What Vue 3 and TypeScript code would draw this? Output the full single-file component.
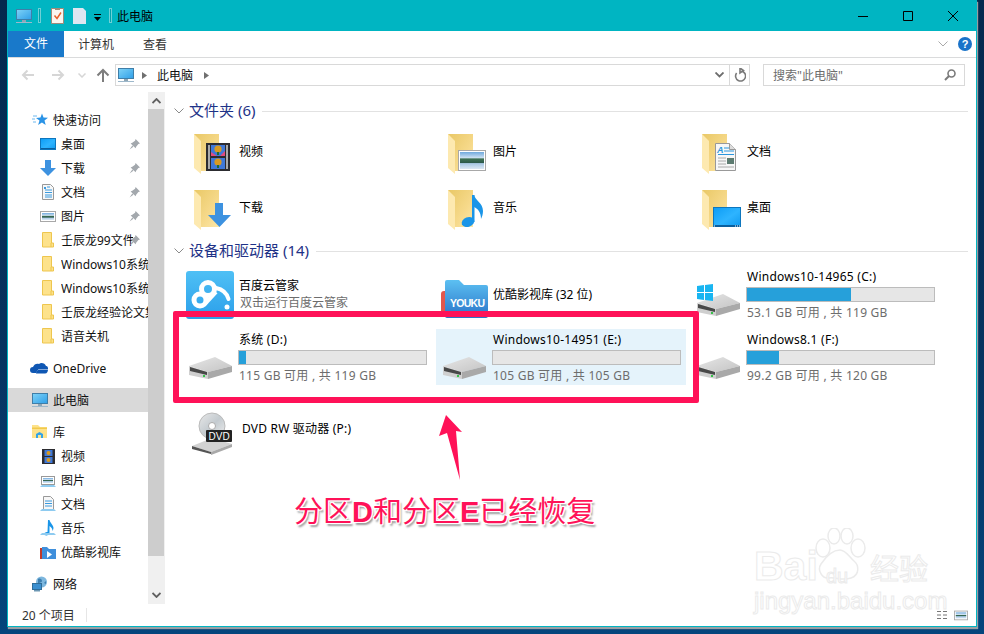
<template>
  <div class="desktop">
    <svg class="sprites" width="0" height="0">
      <defs>
        <linearGradient id="gFolder" x1="0" y1="0" x2="1" y2="1">
          <stop offset="0" stop-color="#e9c866" />
          <stop offset="0.6" stop-color="#f6d98a" />
          <stop offset="1" stop-color="#fce7a8" />
        </linearGradient>
        <linearGradient id="gScreen" x1="0" y1="0" x2="1" y2="1">
          <stop offset="0" stop-color="#7fd3f7" />
          <stop offset="1" stop-color="#2f9fe8" />
        </linearGradient>
        <linearGradient id="gDesk" x1="0" y1="0" x2="1" y2="1">
          <stop offset="0" stop-color="#0c9cf5" />
          <stop offset="0.55" stop-color="#2eb4ff" />
          <stop offset="1" stop-color="#0f9af0" />
        </linearGradient>
        <linearGradient id="gLake" x1="0" y1="0" x2="0" y2="1">
          <stop offset="0" stop-color="#6fa9dd" />
          <stop offset="0.35" stop-color="#cfe2f3" />
          <stop offset="0.4" stop-color="#3f7355" />
          <stop offset="0.62" stop-color="#2c5a4a" />
          <stop offset="0.68" stop-color="#a8c8e4" />
          <stop offset="1" stop-color="#dbe8f4" />
        </linearGradient>
        <linearGradient id="gBaidu" x1="0" y1="0" x2="0" y2="1">
          <stop offset="0" stop-color="#4fc0f5" />
          <stop offset="1" stop-color="#2b9fea" />
        </linearGradient>
        <linearGradient id="gYouku" x1="0" y1="0" x2="0" y2="1">
          <stop offset="0" stop-color="#5cc0f2" />
          <stop offset="1" stop-color="#2a74c8" />
        </linearGradient>
        <linearGradient id="gDriveTop" x1="0" y1="0" x2="1" y2="1">
          <stop offset="0" stop-color="#e6e6e6" />
          <stop offset="1" stop-color="#c4c4c4" />
        </linearGradient>
        <linearGradient id="gDisc" x1="0" y1="0" x2="1" y2="1">
          <stop offset="0" stop-color="#e8e8e8" />
          <stop offset="0.5" stop-color="#c4cbd0" />
          <stop offset="1" stop-color="#f0f0f0" />
        </linearGradient>

        <g id="folder">
          <path d="M4 4h25v37H11z" fill="url(#gFolder)" />
          <path d="M4 4l7 7v33l-7-6z" fill="#fde9b0" />
        </g>
        <g id="film">
          <rect x="16" y="13" width="24" height="28" fill="#2c2c30" />
          <rect x="18" y="15" width="2" height="24" fill="#aaa" />
          <rect x="36" y="15" width="2" height="24" fill="#aaa" />
          <rect x="21" y="15" width="14" height="11" fill="#3f78d8" />
          <rect x="21" y="28" width="14" height="11" fill="#3f78d8" />
          <path d="M21 22l6 4h-6zM35 21l-5 5h5z" fill="#e34a7d" />
          <circle cx="28" cy="19" r="3.6" fill="#d99a20" />
          <circle cx="28" cy="32" r="3.6" fill="#d99a20" />
          <rect x="27" y="22" width="2" height="3" fill="#1f6a35" />
          <rect x="27" y="35" width="2" height="3" fill="#1f6a35" />
        </g>
        <g id="arrow">
          <path d="M25 17h8v12h8L29.500 41 18 29h7z" fill="#3d92e0" />
        </g>
        <g id="picture">
          <rect x="14.500" y="20.500" width="27" height="20" fill="#fff" stroke="#a8a8a8" />
          <rect x="16" y="22" width="24" height="17" fill="url(#gLake)" />
        </g>
        <g id="doc">
          <path d="M17.500 13.500h14l6 6v21h-20z" fill="#f7f7f7" stroke="#999" />
          <path d="M31.500 13.500v6h6" fill="#ddd" stroke="#999" />
          <text x="19" y="23" class="doc-a">A</text>
          <path d="M26 18h5M26 21h10M20 24.500h16" stroke="#2a96dd" />
          <path d="M20 28h8M20 31h8M20 34h8M20 37h16" stroke="#aaa" />
          <rect x="29" y="28" width="7" height="6" fill="#5c7b70" />
        </g>
        <g id="music" fill="#1a95e8">
          <ellipse cx="24" cy="36" rx="6.500" ry="4.800" transform="rotate(-20 24 36)" />
          <rect x="28" y="9" width="2.500" height="27" />
          <path d="M30 9c1 5 9 8 9 16 0 3-1 6-2 8 0-7-3-10-7-12z" />
        </g>
        <g id="desk">
          <rect x="15.500" y="21.500" width="27" height="19" fill="url(#gDesk)" stroke="#0e76bd" />
          <rect x="16" y="39" width="26" height="2" fill="#0a5f9e" />
          <path d="M16 40h1M37 40h1M39 40h1M41 40h1" stroke="#fff" />
        </g>
        <g id="drive" transform="translate(-1 0)">
          <path d="M0 33l26-9 17 9-24 6z" fill="url(#gDriveTop)" />
          <path d="M0 33l19 6v7L0 42z" fill="#cfcfcf" />
          <path d="M1 34l17 5v3L1 38z" fill="#484848" />
          <path d="M19 39l24-6v6l-24 7z" fill="#a9a9a9" />
          <rect x="14" y="42" width="2" height="2" fill="#37c24a" />
        </g>
        <g id="winlogo">
          <path d="M-1 16l7-1v7h-7zM7 15l8-1v8H7zM-1 23h7v7l-7-1zM7 23h8v8l-8-1z" fill="#19b5f1" />
        </g>
        <g id="baidu">
          <rect x="-4" y="1" width="48" height="48" rx="3" fill="url(#gBaidu)" />
          <g fill="none" stroke="#fff">
            <circle cx="10" cy="30" r="6" stroke-width="5" />
            <circle cx="18" cy="19" r="6.500" stroke-width="5" />
            <path d="M15 34L26 22" stroke-width="4" />
            <path d="M26 18Q36 20 38.500 29" stroke-width="4" stroke-linecap="round" />
          </g>
          <circle cx="37" cy="37" r="2.500" fill="#fff" />
        </g>
        <g id="youku">
          <path d="M-3 24a3 3 0 0 1 3-3h6v26h-9z" fill="#e2574c" />
          <path d="M1 12a2 2 0 0 1 2-2h12l5 5h22a2 2 0 0 1 2 2v29a2 2 0 0 1-2 2H3a2 2 0 0 1-2-2z" fill="url(#gYouku)" />
          <text x="6" y="37" class="youku-t" textLength="35">YOUKU</text>
        </g>
        <g id="dvd">
          <circle cx="22" cy="30" r="13" fill="url(#gDisc)" stroke="#bbb" />
          <circle cx="22" cy="30" r="3.500" fill="#fff" stroke="#aaa" />
          <path d="M2 50l20-8 20 6-21 8z" fill="#d2d2d2" />
          <path d="M2 50l19 6v2L2 53z" fill="#555" />
          <path d="M21 56l21-8v3l-21 8z" fill="#a9a9a9" />
          <rect x="16" y="34" width="26" height="12" rx="1" fill="#222" />
          <text x="18.500" y="44" class="dvd-t">DVD</text>
        </g>

        <g id="s-pc">
          <rect x="0.500" y="1.500" width="15" height="10" fill="url(#gScreen)" stroke="#3f7ea8" />
          <rect x="6" y="12" width="4" height="2" fill="#8fa6b5" />
          <rect x="0" y="14" width="16" height="1" fill="#9db8cb" />
        </g>
        <g id="s-star">
          <path d="M10 1.500l1.500 4 4.500.3-3.500 2.800 1.200 4.400-3.800-2.500-3.800 2.500L7.500 8.600 4 6l4.500-.4z" fill="#2a93e6" />
          <path d="M1 4h4M0 7h3M1 10h3" stroke="#6db8ef" />
        </g>
        <g id="s-desk">
          <rect x="0.500" y="2.500" width="15" height="11" fill="url(#gDesk)" stroke="#0e76bd" />
          <rect x="1" y="12" width="14" height="1" fill="#0a5f9e" />
        </g>
        <g id="s-down">
          <path d="M5 0h6v8h5l-8 8-8-8h5z" fill="#3d92e0" />
        </g>
        <g id="s-doc">
          <path d="M2.500 .5h8l3 3v12h-11z" fill="#f7f7f7" stroke="#999" />
          <path d="M7 3h3M5 6h7M5 8.500h7M5 11h7M5 13h7" stroke="#3a9ade" />
          <path d="M4 3h2v2H4z" fill="#3a9ade" />
        </g>
        <g id="s-pic">
          <rect x="0.500" y="3.500" width="15" height="10" fill="#fff" stroke="#a8a8a8" />
          <rect x="2" y="5" width="12" height="7" fill="url(#gLake)" />
        </g>
        <g id="s-fold">
          <path d="M2.500 .5h9v10.500h2v4h-11z" fill="#fde28b" stroke="#eec64e" />
          <path d="M11.500 11v4h-1v-4z" fill="#eec64e" />
        </g>
        <g id="s-cloud">
          <path d="M1 13a3 3 0 0 1 0-6c1-3 4-4 6-3 2-2 6-1 7 2 2 0 2 2 2 3h-8c-2 0-3 2-4 4z" fill="#0f57b3" />
          <path d="M4 13.500c0-3 2-4 4-4h8c0 2-1 4-3 4z" fill="#0f57b3" />
        </g>
        <g id="s-lib">
          <path d="M0 1h6l2 2h7v11H0z" fill="#fde28b" />
          <rect x="0" y="3.500" width="15" height="1.500" fill="#f2c94c" />
          <path d="M4 14v-4l3.500-2 3.500 2v4z" fill="#35a4e6" />
          <rect x="6" y="11" width="3" height="3" fill="#fde28b" />
        </g>
        <g id="s-film">
          <rect x="2" y="1" width="13" height="15" fill="#2c2c30" />
          <rect x="4.500" y="2" width="8" height="6" fill="#3f78d8" />
          <rect x="4.500" y="9" width="8" height="6" fill="#3f78d8" />
          <circle cx="8.500" cy="5" r="2" fill="#d99a20" />
          <circle cx="8.500" cy="12" r="2" fill="#d99a20" />
        </g>
        <g id="s-libpic">
          <rect x="1.500" y="4.500" width="13" height="8" fill="#fff" stroke="#999" />
          <rect x="3" y="6" width="10" height="5" fill="url(#gLake)" />
          <path d="M0 15l2-2h12l2 2z" fill="#8ecbf0" />
        </g>
        <g id="s-libdoc">
          <path d="M3.500 .5h7l3 3v10h-10z" fill="#f7f7f7" stroke="#999" />
          <path d="M5 5h7M5 7.500h7M5 10h7" stroke="#3a9ade" />
          <path d="M0 15l2-2h12l2 2z" fill="#8ecbf0" />
        </g>
        <g id="s-libmus">
          <path d="M8 0h1.500c.5 3 4 5 4 8 0 1-.5 2-1 3 0-3-2-4-3-5v7c0 2-3 3-5 2-1-2 1-3 3-3z" fill="#1a95e8" />
          <path d="M0 15l2-2h12l2 2z" fill="#8ecbf0" />
        </g>
        <g id="s-youku">
          <rect x="0" y="4" width="3" height="11" fill="#c0392b" />
          <path d="M2 3h5l2 2h7v10H2z" fill="#3f8fdb" />
          <path d="M7 7l5 3.500-5 3.500z" fill="#fff" />
        </g>
        <g id="s-net">
          <circle cx="9.500" cy="6" r="5.500" fill="#7db7de" />
          <path d="M6 3c2-1 4 0 4 2s-3 1-4 3zM12 7l2-2v3z" fill="#3d7fb0" />
          <rect x="0.500" y="7.500" width="9" height="6" fill="#3a8fd0" stroke="#2f6d99" />
          <rect x="2" y="14" width="6" height="1.500" fill="#6d97b3" />
        </g>
      </defs>
    </svg>

    <div class="window">
      <div class="titlebar">
        <svg class="ic16"><use href="#s-pc" /></svg>
        <i class="tsep"></i>
        <svg class="qa-doc" viewBox="0 0 13 16">
          <path d="M.5.5h12v15H.5z" fill="#fbf6ef" stroke="#a08a7a" />
          <path d="M3.500 7.500l2.500 3 4-6" fill="none" stroke="#e8602a" stroke-width="1.500" />
          <rect x="4" y="0" width="5" height="2" fill="#a08a7a" />
        </svg>
        <svg class="qa-blank" viewBox="0 0 13 16">
          <path d="M0 0h10l3 3v13H0z" fill="#dfe6f1" />
        </svg>
        <svg class="qa-drop" viewBox="0 0 7 7">
          <path d="M0 0h7v1H0z" fill="#000" />
          <path d="M0 3h7L3.500 7z" fill="#000" />
        </svg>
        <i class="tsep second"></i>
        <span class="title">此电脑</span>
        <div class="winbtns">
          <svg width="10" height="10" viewBox="0 0 10 10"><path d="M0 5.500h10" stroke="#000" /></svg>
          <svg width="10" height="10" viewBox="0 0 10 10"><path d="M.5.500h9v9h-9z" fill="none" stroke="#000" /></svg>
          <svg width="10" height="10" viewBox="0 0 10 10"><path d="M0 0l10 10M10 0L0 10" stroke="#000" /></svg>
        </div>
      </div>

      <div class="tabs">
        <span class="tab file">文件</span>
        <span class="tab comp">计算机</span>
        <span class="tab view">查看</span>
        <svg class="collapse" width="10" height="6" viewBox="0 0 10 6"><path d="M.5.500l4.500 4.500L9.500.500" fill="none" stroke="#a9a9a9" /></svg>
        <span class="help">?</span>
      </div>

      <div class="addr">
        <svg class="nav" width="14" height="12" viewBox="0 0 14 12"><path d="M13 6H2M6.500 1.500L2 6l4.500 4.500" fill="none" stroke="#d6d6d6" stroke-width="2" /></svg>
        <svg class="nav fwd" width="14" height="12" viewBox="0 0 14 12"><path d="M1 6h11M7.500 1.500L12 6l-4.500 4.500" fill="none" stroke="#d6d6d6" stroke-width="2" /></svg>
        <svg class="nav drop" width="8" height="5" viewBox="0 0 8 5"><path d="M.5.500L4 4 7.500.500" fill="none" stroke="#d6d6d6" stroke-width="1.500" /></svg>
        <svg class="nav up" width="14" height="14" viewBox="0 0 14 14"><path d="M7 14V2M1.500 7.500L7 2l5.500 5.500" fill="none" stroke="#7d7d7d" stroke-width="2" /></svg>
        <div class="pathbox">
          <svg class="ic16"><use href="#s-pc" /></svg>
          <svg class="crumb first" width="5" height="7" viewBox="0 0 5 7"><path d="M0 0l5 3.500L0 7z" fill="#707070" /></svg>
          <span class="crumb-t">此电脑</span>
          <svg class="crumb" width="5" height="7" viewBox="0 0 5 7"><path d="M0 0l5 3.500L0 7z" fill="#707070" /></svg>
          <svg class="pathdrop" width="9" height="6" viewBox="0 0 9 6"><path d="M.5.500l4 4 4-4" fill="none" stroke="#6d6d6d" stroke-width="1.800" /></svg>
          <div class="refresh">
            <svg width="12" height="14" viewBox="0 0 12 14"><path d="M7.500 3.100A5 5 0 1 1 2.600 5M6 0v5l3.500-2.500z" fill="none" stroke="#7a7a7a" stroke-width="1.600" /></svg>
          </div>
        </div>
        <div class="searchbox">
          <span>搜索"此电脑"</span>
          <svg width="12" height="12" viewBox="0 0 12 12"><circle cx="7.500" cy="4.500" r="3.500" fill="none" stroke="#7a7a7a" stroke-width="1.600" /><path d="M5 7l-4 4" stroke="#7a7a7a" stroke-width="2" /></svg>
        </div>
      </div>

      <div class="body">
        <nav class="side">
          <div
            v-for="row in navRows"
            :key="row.key"
            class="navrow"
            :class="{ sub: row.sub, active: row.active, gap: row.gap }"
          >
            <svg class="ic16"><use :href="'#s-' + row.icon" /></svg>
            <span class="navlabel" :class="{ pinned: row.pin }">{{ row.label }}</span>
            <svg v-if="row.pin" class="pin" width="11" height="11" viewBox="0 0 10 10">
              <path d="M6 0l4 4-1.500.5L6.500 7 6 8.500 1.500 4 3 3.500 5.500 1.500zM3 6L.5 9.500 4 7z" fill="#a3a8ad" />
            </svg>
          </div>
        </nav>
        <div class="scroll">
          <svg class="sarrow" width="9" height="6" viewBox="0 0 9 6"><path d="M.5 5l4-4 4 4" fill="none" stroke="#606060" stroke-width="1.800" /></svg>
          <div class="thumb"></div>
          <svg class="sarrow down" width="9" height="6" viewBox="0 0 9 6"><path d="M.5 1l4 4 4-4" fill="none" stroke="#606060" stroke-width="1.800" /></svg>
        </div>

        <main class="pane">
          <div class="group">
            <svg width="10" height="6" viewBox="0 0 10 6"><path d="M.5.500L5 5 9.500.500" fill="none" stroke="#8a8a8a" /></svg>
            <span>文件夹 (6)</span>
            <i></i>
          </div>
          <div class="tiles folders">
            <div v-for="f in folders" :key="f.label" class="tile">
              <svg class="big" viewBox="0 0 48 48">
                <use href="#folder" />
                <use :href="'#' + f.icon" />
              </svg>
              <span class="fname">{{ f.label }}</span>
            </div>
          </div>

          <div class="group second">
            <svg width="10" height="6" viewBox="0 0 10 6"><path d="M.5.500L5 5 9.500.500" fill="none" stroke="#8a8a8a" /></svg>
            <span>设备和驱动器 (14)</span>
            <i></i>
          </div>
          <div class="tiles devices">
            <div class="tile">
              <svg class="big dev" viewBox="0 0 48 48"><use href="#baidu" /></svg>
              <div class="app">
                <div>百度云管家</div>
                <div class="sub-t">双击运行百度云管家</div>
              </div>
            </div>
            <div class="tile">
              <svg class="big dev" viewBox="0 0 48 48"><use href="#youku" /></svg>
              <span class="single">优酷影视库 (32 位)</span>
            </div>
            <div v-for="d in drives" :key="d.name" class="tile" :class="{ selected: d.selected }">
              <svg class="big dev" viewBox="0 0 48 48">
                <use href="#drive" />
                <use v-if="d.win" href="#winlogo" />
              </svg>
              <div class="drive">
                <div class="dname">{{ d.name }}</div>
                <div class="bar"><div class="fill" :style="{ width: d.used + '%' }"></div></div>
                <div class="sub-t">{{ d.free }}</div>
              </div>
            </div>
            <div class="tile dvdrow">
              <svg class="big dev" viewBox="0 0 48 48"><use href="#dvd" /></svg>
              <span class="single dvdlabel">DVD RW 驱动器 (P:)</span>
            </div>
          </div>
        </main>
      </div>

      <div class="status">
        <span class="count">20 个项目</span>
        <i class="ssep"></i>
        <div class="views">
          <svg width="10" height="10" viewBox="0 0 10 10"><path d="M0 1.500h4M6 1.500h4M0 5h4M6 5h4M0 8.500h4M6 8.500h4" stroke="#777" /></svg>
          <svg class="ic16 thumbs" viewBox="0 0 16 16"><use href="#s-pic" /></svg>
        </div>
      </div>
    </div>

    <!-- annotations drawn over the screenshot -->
    <div class="redbox"></div>
    <svg class="redarrow" width="30" height="70" viewBox="435 412 30 70">
      <path d="M446 415l16 17-6-1 4 49-13-47-8 3z" fill="#ff1258" />
    </svg>
    <div class="caption">分区<b>D</b>和分区<b>E</b>已经恢复</div>

    <div class="mark">
      <span class="m-bai">Bai</span>
      <svg class="m-paw" width="52" height="58" viewBox="0 0 52 58">
        <g fill="#fff" stroke="#ebebeb" stroke-width="1.500">
          <ellipse cx="9" cy="20" rx="7" ry="9" />
          <ellipse cx="20" cy="8" rx="6" ry="8" />
          <ellipse cx="33" cy="8" rx="6" ry="8" />
          <ellipse cx="44" cy="20" rx="7" ry="9" />
          <path d="M26 22c6 0 9 7 14 11s6 14-3 17-15-1-22 0-12-8-8-14 11-14 19-14z" />
        </g>
      </svg>
      <span class="m-du">du</span>
      <span class="m-jy">经验</span>
      <span class="m-url">jingyan.baidu.com</span>
    </div>
  </div>
</template>

<script setup lang="ts">
interface NavRow {
  key: string
  label: string
  icon: string
  sub?: boolean
  pin?: boolean
  active?: boolean
  gap?: boolean
}

const navRows: NavRow[] = [
  { key: 'quick', label: '快速访问', icon: 'star' },
  { key: 'desk', label: '桌面', icon: 'desk', sub: true, pin: true },
  { key: 'down', label: '下载', icon: 'down', sub: true, pin: true },
  { key: 'doc', label: '文档', icon: 'doc', sub: true, pin: true },
  { key: 'pic', label: '图片', icon: 'pic', sub: true, pin: true },
  { key: 'f99', label: '壬辰龙99文件夹', icon: 'fold', sub: true, pin: true },
  { key: 'w1', label: 'Windows10系统文件', icon: 'fold', sub: true },
  { key: 'w2', label: 'Windows10系统文件', icon: 'fold', sub: true },
  { key: 'jy', label: '壬辰龙经验论文集', icon: 'fold', sub: true },
  { key: 'voice', label: '语音关机', icon: 'fold', sub: true },
  { key: 'one', label: 'OneDrive', icon: 'cloud', gap: true },
  { key: 'pc', label: '此电脑', icon: 'pc', active: true, gap: true },
  { key: 'lib', label: '库', icon: 'lib', gap: true },
  { key: 'lv', label: '视频', icon: 'film', sub: true },
  { key: 'lp', label: '图片', icon: 'libpic', sub: true },
  { key: 'ld', label: '文档', icon: 'libdoc', sub: true },
  { key: 'lm', label: '音乐', icon: 'libmus', sub: true },
  { key: 'ly', label: '优酷影视库', icon: 'youku', sub: true },
  { key: 'net', label: '网络', icon: 'net', gap: true },
]

const folders = [
  { label: '视频', icon: 'film' },
  { label: '图片', icon: 'picture' },
  { label: '文档', icon: 'doc' },
  { label: '下载', icon: 'arrow' },
  { label: '音乐', icon: 'music' },
  { label: '桌面', icon: 'desk' },
]

const drives = [
  { name: 'Windows10-14965 (C:)', free: '53.1 GB 可用 , 共 119 GB', used: 55.6, win: true },
  { name: '系统 (D:)', free: '115 GB 可用 , 共 119 GB', used: 4 },
  { name: 'Windows10-14951 (E:)', free: '105 GB 可用 , 共 105 GB', used: 0, selected: true },
  { name: 'Windows8.1 (F:)', free: '99.2 GB 可用 , 共 120 GB', used: 17.3 },
]
</script>

<style>
html,
body {
  margin: 0;
  height: 634px;
  overflow: hidden;
}
</style>

<style scoped>
.desktop {
  position: relative;
  height: 634px;
  padding-left: 7px;
  box-sizing: border-box;
  background: linear-gradient(180deg, #04294e 0%, #06335f 55%, #04457c 100%);
  font-family: "Noto Sans", "Noto Sans CJK SC", sans-serif;
  font-size: 12px;
  color: #000;
}

.sprites {
  position: absolute;
}

.doc-a {
  font: italic bold 9px "Liberation Sans", sans-serif;
  fill: #2a96dd;
}

.youku-t {
  font: bold 10.500px "Liberation Sans", sans-serif;
  fill: #fff;
}

.dvd-t {
  font: 10px "Liberation Sans", sans-serif;
  fill: #fff;
}

.window {
  width: 970px;
  height: 627px;
  box-sizing: border-box;
  border: 1px solid #00b5c2;
  border-top: 0;
  background: #fff;
  display: flex;
  flex-direction: column;
  box-shadow: 1px 2px 1px rgba(170, 170, 170, 0.9);
}

.ic16 {
  width: 16px;
  height: 16px;
  flex: none;
  overflow: visible;
}

.titlebar {
  height: 31px;
  background: #00b5c2;
  display: flex;
  align-items: center;
  padding-left: 8px;
  flex: none;
}

.tsep {
  width: 1px;
  height: 13px;
  margin-left: 6px;
  border: 1px solid #6fd0d6;
  background: #00a3af;
}

.qa-doc {
  width: 13px;
  height: 16px;
  margin-left: 10px;
}

.qa-blank {
  width: 13px;
  height: 16px;
  margin-left: 9px;
}

.qa-drop {
  width: 7px;
  height: 7px;
  margin-left: 8px;
  margin-top: 3px;
}

.tsep.second {
  margin-left: 8px;
}

.title {
  margin-left: 5px;
}

.winbtns {
  margin-left: auto;
  display: flex;
  gap: 35px;
  padding-right: 18px;
}

.tabs {
  height: 26px;
  flex: none;
  display: flex;
  align-items: center;
  border-bottom: 1px solid #dadbdc;
  color: #333;
}

.tab.file {
  width: 56px;
  height: 26px;
  line-height: 26px;
  text-align: center;
  background: #1979ca;
  color: #fff;
}

.tab.comp {
  margin-left: 14px;
}

.tab.view {
  margin-left: 29px;
}

.collapse {
  margin-left: auto;
}

.help {
  width: 14px;
  height: 14px;
  margin: 0 4px 0 10px;
  border-radius: 50%;
  background: #1a73c9;
  color: #fff;
  font: bold 11px/14px "Liberation Sans", sans-serif;
  text-align: center;
}

.addr {
  height: 34px;
  flex: none;
  display: flex;
  align-items: center;
  padding-left: 13px;
}

.nav.fwd {
  margin-left: 16px;
}

.nav.drop {
  margin-left: 13px;
}

.nav.up {
  margin-left: 10px;
}

.pathbox {
  width: 635px;
  height: 22px;
  margin-left: 5px;
  box-sizing: border-box;
  border: 1px solid #d9d9d9;
  display: flex;
  align-items: center;
  padding-left: 2px;
}

.crumb.first {
  margin-left: 8px;
}

.crumb-t {
  margin: 0 11px 0 10px;
  color: #111;
}

.pathdrop {
  margin-left: auto;
  margin-right: 5px;
}

.refresh {
  width: 19px;
  height: 20px;
  border-left: 1px solid #d9d9d9;
  display: flex;
  align-items: center;
  justify-content: center;
}

.searchbox {
  width: 202px;
  height: 22px;
  margin-left: 13px;
  box-sizing: border-box;
  border: 1px solid #d9d9d9;
  display: flex;
  align-items: center;
  justify-content: space-between;
  padding: 0 8px 0 9px;
  color: #6d6d6d;
}

.body {
  flex: 1;
  display: flex;
  min-height: 0;
}

.side {
  width: 140px;
  flex: none;
  overflow: hidden;
  padding-top: 16px;
  box-sizing: border-box;
  color: #111;
}

.navrow {
  height: 24px;
  display: flex;
  align-items: center;
  gap: 5px;
  padding-left: 24px;
  white-space: nowrap;
}

.navrow.sub {
  padding-left: 32px;
}

.navrow.gap {
  margin-top: 8px;
}

.navrow.active {
  background: #d9d9d9;
}

.navlabel {
  overflow: hidden;
  flex: 1;
}

.navlabel.pinned {
  flex: 0 0 72px;
}

.pin {
  margin-left: -9px;
  flex: none;
}

.scroll {
  width: 16px;
  flex: none;
  background: #f0f0f0;
  display: flex;
  flex-direction: column;
  align-items: center;
}

.sarrow {
  margin: 6px 0 5px;
  flex: none;
}

.sarrow.down {
  margin: auto 0 6px;
}

.thumb {
  width: 100%;
  height: 447px;
  background: #cdcdcd;
}

.pane {
  flex: 1;
  padding: 9px 8px 0 17px;
  border-left: 1px solid #f0f0f0;
  box-sizing: border-box;
  min-width: 0;
}

.group {
  height: 20px;
  margin: 0 0 2px -8px;
  display: flex;
  align-items: center;
  gap: 5px;
  font-size: 15px;
  color: #1e3287;
}

.group span {
  margin-bottom: 4px;
}

.group.second {
  margin: 6px 0 5px -8px;
}

.group i {
  flex: 1;
  height: 1px;
  margin-left: 2px;
  background: #e2e2e2;
}

.tiles {
  display: grid;
  grid-template-columns: repeat(3, 250px);
  column-gap: 4px;
}

.devices {
  row-gap: 7px;
}

.tile {
  height: 56px;
  display: flex;
  align-items: flex-start;
  padding-left: 8px;
  box-sizing: border-box;
}

.tile.selected {
  background: #e5f3fb;
}

.big {
  width: 48px;
  height: 48px;
  flex: none;
  margin-top: 7px;
  overflow: visible;
}

.big.dev {
  margin-top: 4px;
}

.fname {
  margin: 21px 0 0 1px;
  line-height: 16px;
}

.app {
  margin: 11px 0 0 1px;
  line-height: 17px;
}

.single {
  margin: 21px 0 0 1px;
  line-height: 16px;
}

.dvdlabel {
  margin: 29px 0 0 4px;
  letter-spacing: 0.2px;
}

.dvdrow {
  grid-column: 1;
}

.drive {
  width: 189px;
  margin: 3px 0 0 0;
  line-height: 16px;
  letter-spacing: 0.25px;
  white-space: nowrap;
}

.dname {
  padding-left: 1px;
}

.bar {
  height: 15px;
  margin: 2px 0 3px;
  box-sizing: border-box;
  border: 1px solid #bcbcbc;
  background: #e6e6e6;
}

.fill {
  height: 100%;
  background: #26a0da;
}

.sub-t {
  color: #6d6d6d;
  padding-left: 1px;
}

.status {
  height: 22px;
  flex: none;
  display: flex;
  align-items: center;
  padding-left: 14px;
  color: #333;
}

.ssep {
  width: 1px;
  height: 14px;
  margin-left: 11px;
  background: #e6e6e6;
}

.views {
  margin-left: auto;
  display: flex;
  align-items: center;
  gap: 7px;
  padding-right: 8px;
}

.thumbs {
  width: 14px;
  height: 14px;
}

.redbox {
  position: absolute;
  left: 173px;
  top: 311px;
  width: 526px;
  height: 92px;
  box-sizing: border-box;
  border: 6px solid #ff1258;
  border-radius: 2px;
}

.redarrow {
  position: absolute;
  left: 435px;
  top: 412px;
}

.caption {
  position: absolute;
  left: 294px;
  top: 491px;
  font: 400 29px/42px "Liberation Sans", "Noto Sans CJK SC", sans-serif;
  color: #ff1258;
  white-space: nowrap;
  text-shadow:
    1px 0 0 #fff, -1px 0 0 #fff, 0 1px 0 #fff, 0 -1px 0 #fff,
    1px 1px 0 #fff, -1px -1px 0 #fff, 1px -1px 0 #fff, -1px 1px 0 #fff,
    2px 3px 2px #9a9a9a;
}

.mark {
  position: absolute;
  left: 750px;
  top: 528px;
  width: 190px;
  height: 90px;
  color: #fff;
  -webkit-text-stroke: 1px #ebebeb;
}

.mark span {
  position: absolute;
  white-space: nowrap;
}

.m-bai {
  left: 4px;
  top: 14px;
  font: bold 41px/48px "Liberation Sans", sans-serif;
}

.m-paw {
  position: absolute;
  left: 64px;
  top: 0;
}

.m-du {
  left: 76px;
  top: 38px;
  font: 20px/20px "Liberation Sans", sans-serif;
}

.m-jy {
  left: 120px;
  top: 20px;
  font: 29px/38px "Noto Sans CJK SC", sans-serif;
}

.m-url {
  left: 4px;
  top: 61px;
  font: 24px/24px "Liberation Sans", sans-serif;
}
</style>
